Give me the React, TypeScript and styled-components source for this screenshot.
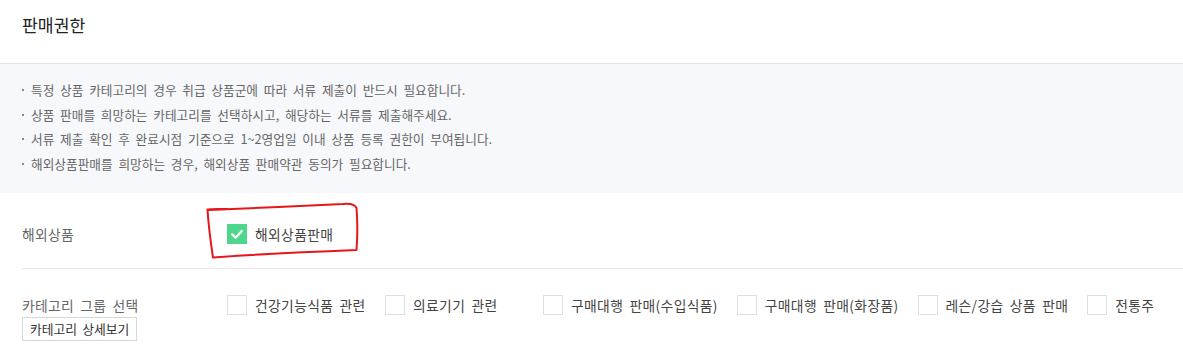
import React from 'react'
import styled, { createGlobalStyle } from 'styled-components'

const GlobalStyle = createGlobalStyle`
  html, body {
    margin: 0;
    padding: 0;
    background: #fff;
  }
  body {
    font-family: 'Noto Sans CJK KR', 'Noto Sans', sans-serif;
    word-spacing: 0.18em;
    -webkit-font-smoothing: antialiased;
  }
`

const notices = [
  '특정 상품 카테고리의 경우 취급 상품군에 따라 서류 제출이 반드시 필요합니다.',
  '상품 판매를 희망하는 카테고리를 선택하시고, 해당하는 서류를 제출해주세요.',
  '서류 제출 확인 후 완료시점 기준으로 1~2영업일 이내 상품 등록 권한이 부여됩니다.',
  '해외상품판매를 희망하는 경우, 해외상품 판매약관 동의가 필요합니다.'
]

const categories = [
  '건강기능식품 관련',
  '의료기기 관련',
  '구매대행 판매(수입식품)',
  '구매대행 판매(화장품)',
  '레슨/강습 상품 판매',
  '전통주'
]

function Checkbox ({ checked = false, label }) {
  return (
    <CheckItem>
      <Box checked={checked}>
        {checked && (
          <svg width='20' height='20' viewBox='0 0 20 20'>
            <polyline
              points='5.2,10.4 8.6,13.8 14.8,7'
              fill='none'
              stroke='#fff'
              strokeWidth='2.3'
              strokeLinecap='round'
              strokeLinejoin='round'
            />
          </svg>
        )}
      </Box>
      <span>{label}</span>
    </CheckItem>
  )
}

export default function App () {
  const [picked, setPicked] = React.useState([])

  const toggle = (name) => {
    setPicked((p) => p.includes(name) ? p.filter((n) => n !== name) : [...p, name])
  }

  return (
    <Page>
      <GlobalStyle />
      <Header>
        <Title>판매권한</Title>
      </Header>
      <Notice>
        {notices.map((text) => (
          <NoticeLine key={text}>
            <Dot />
            {text}
          </NoticeLine>
        ))}
      </Notice>
      <Body>
        <OverseasRow>
          <Label>해외상품</Label>
          <Checkbox checked label='해외상품판매' />
          <Scribble width='160' height='62' viewBox='0 0 160 62'>
            <path
              d='M4 10 C 40 8.5, 100 6, 138 4 C 146 3.3, 150 4.5, 151.5 8 C 152.5 20, 152.5 37, 151.5 50 C 100 52, 50 54.5, 8 57.5 C 5.5 41, 3.5 25, 2.5 9.5 C 5 8.6, 12 8.8, 22 9'
              fill='none'
              stroke='#e8151b'
              strokeWidth='2'
              strokeLinecap='round'
              strokeLinejoin='round'
            />
          </Scribble>
        </OverseasRow>
        <CategoryRow>
          <LabelColumn>
            <Label>카테고리 그룹 선택</Label>
            <DetailButton type='button'>카테고리 상세보기</DetailButton>
          </LabelColumn>
          <CheckGroup>
            {categories.map((name) => (
              <div key={name} onClick={() => toggle(name)}>
                <Checkbox checked={picked.includes(name)} label={name} />
              </div>
            ))}
          </CheckGroup>
        </CategoryRow>
      </Body>
    </Page>
  )
}

const Page = styled.div`
  width: 1183px;
  min-height: 352px;
  background: #fff;
`

const Header = styled.div`
  box-sizing: border-box;
  height: 64px;
  padding: 13px 22px 0;
  border-bottom: 1px solid #e4e5ea;
`

const Title = styled.h2`
  margin: 0;
  font-size: 17.2px;
  font-weight: 400;
  line-height: 24px;
  color: #222;
`

const Notice = styled.div`
  box-sizing: border-box;
  height: 129px;
  padding: 14px 22px 17px;
  background: #f7f8fb;
`

const NoticeLine = styled.div`
  display: flex;
  align-items: center;
  gap: 7px;
  font-size: 12.7px;
  line-height: 24.5px;
  color: #666;
  white-space: nowrap;
`

const Dot = styled.i`
  flex-shrink: 0;
  width: 2px;
  height: 2px;
  background: #8a8a8a;
`

const Body = styled.div`
  padding-left: 22px;
`

const OverseasRow = styled.div`
  position: relative;
  display: flex;
  align-items: center;
  padding: 31px 0 24px;
  border-bottom: 1px solid #e8e8eb;
`

const CategoryRow = styled.div`
  display: flex;
  align-items: flex-start;
  padding-top: 26px;
`

const LabelColumn = styled.div`
  display: flex;
  flex-direction: column;
  align-items: flex-start;
  gap: 2px;
  width: 205px;
  flex-shrink: 0;
`

const Label = styled.div`
  width: 205px;
  flex-shrink: 0;
  font-size: 13.8px;
  letter-spacing: 0.3px;
  line-height: 20px;
  color: #666;
  white-space: nowrap;
`

const DetailButton = styled.button`
  box-sizing: border-box;
  height: 24px;
  padding: 0 7px;
  border: 1px solid #d6d7db;
  background: #fff;
  font-family: inherit;
  font-size: 12.8px;
  line-height: 22px;
  word-spacing: 0.18em;
  color: #333;
  white-space: nowrap;
  cursor: pointer;
`

const CheckGroup = styled.div`
  display: flex;
  gap: 19px;
`

const CheckItem = styled.label`
  display: flex;
  align-items: center;
  gap: 8px;
  min-width: 139px;
  flex-shrink: 0;
  font-size: 13.8px;
  letter-spacing: 0.35px;
  line-height: 20px;
  color: #444;
  white-space: nowrap;
  cursor: pointer;
`

const Box = styled.span`
  box-sizing: border-box;
  display: inline-flex;
  width: 20px;
  height: 20px;
  flex-shrink: 0;
  border: ${({ checked }) => checked ? 'none' : '1px solid #dcdfe5'};
  background: ${({ checked }) => checked ? '#4dd68c' : '#fff'};
`

const Scribble = styled.svg`
  position: absolute;
  left: 183px;
  top: 7px;
  pointer-events: none;
`
